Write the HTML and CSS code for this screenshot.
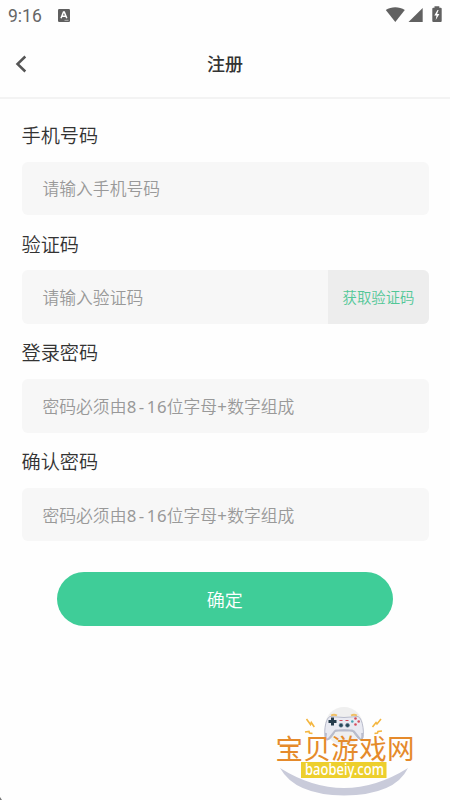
FILE: index.html
```html
<!DOCTYPE html>
<html lang="zh-CN">
<head>
  <meta charset="UTF-8">
  <meta name="viewport" content="width=device-width, initial-scale=1.0">
  <title>注册</title>
  <link rel="stylesheet" href="styles.css">
</head>
<body>

  <div class="status-bar">
    <span class="time">9:16</span>
    <svg class="icon-a" width="12" height="13" viewBox="0 0 12 13">
      <rect width="12" height="13" rx="1.2" fill="#5f5f5f"/>
      <path d="M3 9.2 5.5 3h.8l2.5 6.2M4 7.2h3.8" fill="none" stroke="#fff" stroke-width="1.5"/>
      <path d="M6.5 11.3h4" stroke="#ccc" stroke-width=".8"/>
    </svg>
    <svg class="icons" width="58" height="18" viewBox="0 0 58 18">
      <g fill="#616161">
        <path d="M.8 4.1C6.3.3 14.2.3 19.8 4.1L10.3 16.1z"/>
        <path d="M37.7 2v14H23.5z"/>
        <path d="M49.5 1.7V.3h4.8v1.4h1.4q1 0 1 1v12.4q0 1-1 1h-7.4q-1 0-1-1V2.7q0-1 1-1z"/>
      </g>
      <path d="M52.5 4 49.3 9.5h2.200l-.8 4.500 3.700-6h-2.300l1.500-4z" fill="#fff"/>
    </svg>
  </div>

  <div class="header">
    <svg class="back" width="12" height="18" viewBox="0 0 12 18">
      <path d="M10.3 1.5 2.5 9l7.8 7.500" fill="none" stroke="#555" stroke-width="2.500"/>
    </svg>
    <h1>注册</h1>
  </div>

  <div class="form">
    <div class="group">
      <div class="label">手机号码</div>
      <div class="field"><span class="hint">请输入手机号码</span></div>
    </div>
    <div class="group">
      <div class="label">验证码</div>
      <div class="field">
        <span class="hint">请输入验证码</span>
        <a class="get-code">获取验证码</a>
      </div>
    </div>
    <div class="group">
      <div class="label">登录密码</div>
      <div class="field"><span class="hint">密码必须由<i>8</i><i>-</i><i>1</i><i>6</i>位字母<i>+</i>数字组成</span></div>
    </div>
    <div class="group">
      <div class="label">确认密码</div>
      <div class="field"><span class="hint">密码必须由<i>8</i><i>-</i><i>1</i><i>6</i>位字母<i>+</i>数字组成</span></div>
    </div>
    <div class="submit">确定</div>
  </div>

  <svg class="logo" width="160" height="100" viewBox="0 0 160 100">
    <circle cx="79" cy="26" r="19" fill="#efefef"/>
    <!-- gamepad -->
    <path d="M65 16.500Q79 18.500 93 16.500C98 18 100 36 97 39.500Q94 41 88 31.500Q79 28 70 31.500Q65 41 61.500 39.500C58 36 60 18 65 16.500z" fill="#e9eaf2" stroke="#b9bccc" stroke-width="1"/>
    <path d="M61 33q-1.500 9 3 5.500l6-7.500 1-.5h16l2 1 6 7.500q3 2 2.200-6" fill="none" stroke="#b9bccc" stroke-width="2"/>
    <path d="M66 15.500q3-1.500 6 0M86 15.500q3-1.500 6 0" fill="none" stroke="#efbf65" stroke-width="1.800"/>
    <path d="M67.500 17.500v8M63.500 21.500h8" stroke="#253b4b" stroke-width="3"/>
    <g fill="#d64d5d">
      <circle cx="90.500" cy="18.500" r="1.300"/><circle cx="90.500" cy="24.500" r="1.300"/>
      <circle cx="93.700" cy="21.500" r="1.300"/>
      <path d="M74.500 20h3v1h-3zM80.500 20h3v1h-3z"/>
    </g>
    <circle cx="87.300" cy="21.500" r="1.300" fill="#4ba1b2"/>
    <g fill="#27495a" stroke="#7b91a2" stroke-width=".6">
      <circle cx="76" cy="25.300" r="2"/><circle cx="82.500" cy="25.300" r="2"/>
    </g>
    <!-- sparks -->
    <g fill="none" stroke="#f4b63f" stroke-width="1.600">
      <path d="M41.500 19l4 5.500.8-2 3 4.500"/>
      <path d="M40 32l4-.5.500 1.500 3 .5"/>
      <path d="M116 19l-4 5-1-1.500-3.500 4.500"/>
      <path d="M117 31l-4 .5-.5 1.500-3 .5"/>
    </g>
    <path d="M15 68Q79 108 143 68Q130 95 79 95.500Q30 95 15 68z" fill="#c9cbda"/>
    <text class="logo-name" x="10.500" y="58.500" textLength="139">宝贝游戏网</text>
    <rect x="36" y="62" width="85.500" height="16" fill="#edcf2d"/>
    <text class="logo-url" x="40" y="74.500" textLength="79" lengthAdjust="spacingAndGlyphs">baobeiy.com</text>
  </svg>

  <div class="corner"></div>

</body>
</html>
```
FILE: styles.css
```css
body {
  margin: 0;
  height: 800px;
  position: relative;
  overflow: hidden;
  background: #fefefe;
  color: #333;
  font-family: "Noto Sans CJK SC", sans-serif;
  font-weight: 350;
}

.status-bar {
  display: flex;
  align-items: center;
  height: 30px;
  padding: 0 8px;
}

.time {
  width: 50px;
  padding-top: 2px;
  font-family: Roboto, sans-serif;
  font-size: 17.5px;
  font-weight: 400;
  color: #666;
}

.icons {
  margin-left: auto;
  margin-right: -8px;
  padding-right: 7px;
}

.header {
  display: grid;
  grid-template-columns: 40px 1fr 40px;
  align-items: center;
  height: 67px;
  border-bottom: 2px solid #f3f3f3;
}

.back {
  margin-left: 15px;
}

h1 {
  margin: 0;
  padding-bottom: 2px;
  text-align: center;
  font-size: 18px;
  line-height: 28px;
  font-weight: 500;
}

.form {
  padding: 19px 21px 0 21.5px;
}

.group {
  height: 108.7px;
}

.label {
  height: 43.7px;
  line-height: 34px;
  font-size: 19.2px;
}

.field {
  display: flex;
  align-items: center;
  height: 53.5px;
  padding-left: 21px;
  border-radius: 6px;
  background: #f7f7f7;
  overflow: hidden;
}

.hint {
  flex: 1;
  font-size: 16.8px;
  color: #999;
  white-space: nowrap;
}

.hint i {
  display: inline-block;
  width: .6em;
  font-style: normal;
  font-weight: 400;
  font-family: "Noto Sans", sans-serif;
  text-align: center;
}

.get-code {
  width: 101px;
  line-height: 54px;
  text-align: center;
  font-size: 14.4px;
  color: #52c797;
  background: #ededed;
}

.submit {
  width: 335.5px;
  height: 54px;
  margin: 19.5px 0 0 35.5px;
  border-radius: 27px;
  background: #3fcd98;
  color: #fff;
  font-size: 18px;
  line-height: 54px;
  text-align: center;
}

/* site mark over the bottom corner */
.logo {
  position: absolute;
  left: 265px;
  top: 700px;
}

.logo-name {
  font-size: 27.5px;
  font-weight: 400;
  fill: #e58a2b;
}

.logo-url {
  font-family: "Noto Sans", sans-serif;
  font-size: 16px;
  font-weight: 500;
  fill: #fff;
}

.corner {
  position: absolute;
  left: 0;
  bottom: 0;
  border-left: 2px solid #777;
  border-top: 3px solid transparent;
}
```
